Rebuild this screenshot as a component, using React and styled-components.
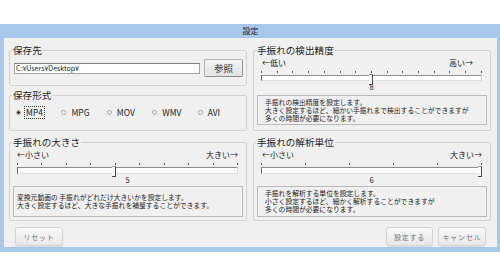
import React from "react";
import styled, { createGlobalStyle } from "styled-components";

const FONT = `"Noto Sans CJK JP", "Noto Sans", sans-serif`;

const Global = createGlobalStyle`
  html, body { margin: 0; padding: 0; background: #ffffff; }
  body { font-family: ${FONT}; }
  * { box-sizing: border-box; }
`;

const Page = styled.div`
  width: 500px;
  height: 278px;
  padding-top: 24px;
  background: #ffffff;
`;

const Window = styled.div`
  width: 500px;
  height: 228px;
  background: #a7c8eb;
  padding: 0 3px 5px 4px;
  display: flex;
  flex-direction: column;
`;

const TitleBar = styled.div`
  height: 14px;
  line-height: 14px;
  text-align: center;
  font-size: 8px;
  color: #1c1c1c;
  font-family: ${FONT};
`;

const Body = styled.div`
  flex: 1;
  background: #f0f0f0;
  padding: 6px 6px 1px 5px;
  display: flex;
  flex-direction: column;
`;

const Grid = styled.div`
  display: grid;
  grid-template-columns: 238px 238px;
  grid-template-rows: 87px 85px;
  column-gap: 6px;
  row-gap: 5px;
`;

const Stack = styled.div`
  display: flex;
  flex-direction: column;
  gap: 3px;
`;

const Group = styled.fieldset`
  margin: 0;
  min-width: 0;
  border: 1px solid #d2d2d2;
  border-radius: 2px;
  padding: ${(p) => p.$pad || "0 3px 3px 3px"};
  display: flex;
  flex-direction: column;
`;

const Legend = styled.legend`
  font-family: ${FONT};
  font-size: 9.6px;
  line-height: 12px;
  height: 12px;
  padding: 0 1px;
  margin-left: -1px;
  color: #1e1e1e;
`;

const PathRow = styled.div`
  display: flex;
  align-items: center;
  gap: 4px;
  height: 18px;
  margin-left: 1px;
`;

const PathField = styled.div`
  flex: 1;
  height: 11px;
  background: #ffffff;
  border: 1px solid #a3a3a3;
  border-top-color: #7c7c7c;
  font-size: 7px;
  line-height: 9px;
  padding-left: 1px;
  color: #202020;
  font-family: ${FONT};
  white-space: nowrap;
  overflow: hidden;
`;

const BrowseButton = styled.button`
  width: 39px;
  height: 18px;
  padding: 0;
  font-family: ${FONT};
  font-size: 9.5px;
  line-height: 16px;
  color: #333333;
  background: linear-gradient(#f4f4f4, #e2e2e2);
  border: 1px solid #b4b4b4;
  border-right-color: #8e8e8e;
  border-bottom-color: #8e8e8e;
  border-radius: 2px;
`;

const RadioRow = styled.div`
  display: flex;
  align-items: center;
  height: 12px;
  margin-left: 3px;
`;

const RadioItem = styled.label`
  width: 47px;
  display: flex;
  align-items: center;
  gap: 4px;
  font-family: ${FONT};
  font-size: 8.5px;
  line-height: 11px;
  color: #262626;
`;

const RadioDot = styled.span`
  width: 5px;
  height: 5px;
  border-radius: 50%;
  border: 1px solid #a0a0a0;
  background: ${(p) =>
    p.$checked ? "radial-gradient(circle, #2a2a2a 0 1px, #ffffff 1.6px)" : "#ffffff"};
  flex: none;
`;

const RadioText = styled.span`
  padding: 0 1px;
  outline: ${(p) => (p.$focus ? "1px dotted #3a3a3a" : "none")};
`;

const LabelRow = styled.div`
  display: flex;
  justify-content: space-between;
  height: 10px;
  line-height: 10px;
  font-size: 8px;
  color: #222222;
  font-family: ${FONT};
  margin: 2px 5px 0 4px;
  padding: ${(p) => p.$pad || "0"};
`;

const TickRow = styled.div`
  display: flex;
  justify-content: space-between;
  height: 2px;
  margin: 3px 5px 0 4px;
`;

const Tick = styled.span`
  width: 1px;
  height: 2px;
  background: #555555;
`;

const Track = styled.div`
  position: relative;
  height: 7px;
  margin: 2px 5px 0 4px;
  background: #ffffff;
  border-top: 1px solid #8c8c8c;
  border-left: 1px solid #6c6c6c;
  border-bottom: 1px solid #dcdcdc;
  border-right: 1px solid #dcdcdc;
`;

const Thumb = styled.span`
  position: absolute;
  top: -2px;
  width: 4px;
  height: 11px;
  background: #f7f7f7;
  border-top: 1px solid #9a9a9a;
  border-right: 1px solid #474747;
  border-bottom: 1px solid #474747;
`;

const ValueText = styled.div`
  height: 9px;
  line-height: 11px;
  text-align: center;
  font-size: 7.5px;
  color: #222222;
  font-family: ${FONT};
  margin: 0 5px 0 4px;
`;

const Desc = styled.div`
  flex: 1;
  margin-top: ${(p) => p.$mt}px;
  border: 1px solid #bababa;
  background: #f0f0f0;
  padding: ${(p) => p.$pad};
  font-family: ${FONT};
  font-size: 6.8px;
  line-height: 8px;
  color: #222222;
  white-space: pre-line;
`;

const Footer = styled.div`
  display: flex;
  align-items: center;
  gap: 5px;
  margin-top: 6px;
  padding: 0 5px 0 6px;
`;

const Spacer = styled.div`
  flex: 1;
`;

const FooterButton = styled.button`
  width: ${(p) => p.$w}px;
  height: 19px;
  padding: 0;
  font-family: ${FONT};
  font-size: 7px;
  letter-spacing: 0.8px;
  color: #767676;
  background: linear-gradient(#f8f8f8, #e8e8e8);
  border: 1px solid #d4d4d4;
  border-radius: 3px;
  box-shadow: 0 1px 1px rgba(0, 0, 0, 0.08);
`;

function Slider({ min, max, value, left, right, labelPad }) {
  const count = max - min + 1;
  const pct = ((value - min) / (max - min)) * 100;
  return (
    <>
      <LabelRow $pad={labelPad}>
        <span>{left}</span>
        <span>{right}</span>
      </LabelRow>
      <TickRow>
        {Array.from({ length: count }).map((_, i) => (
          <Tick key={i} />
        ))}
      </TickRow>
      <Track>
        <Thumb style={{ left: `calc(${pct}% - 3px)` }} />
      </Track>
      <ValueText>{value}</ValueText>
    </>
  );
}

const formats = ["MP4", "MPG", "MOV", "WMV", "AVI"];

export default function App() {
  return (
    <Page>
      <Global />
      <Window>
        <TitleBar>設定</TitleBar>
        <Body>
          <Grid>
            <Stack>
              <Group $pad="3px 3px 8px 3px">
                <Legend>保存先</Legend>
                <PathRow>
                  <PathField>C:¥Users¥Desktop¥</PathField>
                  <BrowseButton>参照</BrowseButton>
                </PathRow>
              </Group>
              <Group $pad="5px 3px 12px 3px">
                <Legend>保存形式</Legend>
                <RadioRow>
                  {formats.map((f, i) => (
                    <RadioItem key={f}>
                      <RadioDot $checked={i === 0} />
                      <RadioText $focus={i === 0}>{f}</RadioText>
                    </RadioItem>
                  ))}
                </RadioRow>
              </Group>
            </Stack>

            <Group $pad="0 3px 5px 3px">
              <Legend>手振れの検出精度</Legend>
              <Slider min={1} max={15} value={8} left="←低い" right="高い→" labelPad="0 9px 0 1px" />
              <Desc $mt={5} $pad="2px 7px">
                {"手振れの検出精度を設定します。\n大きく設定するほど、細かい手振れまで検出することができますが\n多くの時間が必要になります。"}
              </Desc>
            </Group>

            <Group $pad="0 3px 3px 3px">
              <Legend>手振れの大きさ</Legend>
              <Slider min={1} max={10} value={5} left="←小さい" right="大きい→" labelPad="0 0 0 0" />
              <Desc $mt={3} $pad="6px 3px">
                {"変換元動画の 手振れがどれだけ大きいかを設定します。\n大きく設定するほど、大きな手振れを補整することができます。"}
              </Desc>
            </Group>

            <Group $pad="0 3px 3px 3px">
              <Legend>手振れの解析単位</Legend>
              <Slider min={1} max={6} value={6} left="←小さい" right="大きい→" labelPad="0 0 0 1px" />
              <Desc $mt={3} $pad="2px 7px">
                {"手振れを解析する単位を設定します。\n小さく設定するほど、細かく解析することができますが\n多くの時間が必要になります。"}
              </Desc>
            </Group>
          </Grid>
          <Footer>
            <FooterButton $w={48}>リセット</FooterButton>
            <Spacer />
            <FooterButton $w={47}>設定する</FooterButton>
            <FooterButton $w={48}>キャンセル</FooterButton>
          </Footer>
        </Body>
      </Window>
    </Page>
  );
}
